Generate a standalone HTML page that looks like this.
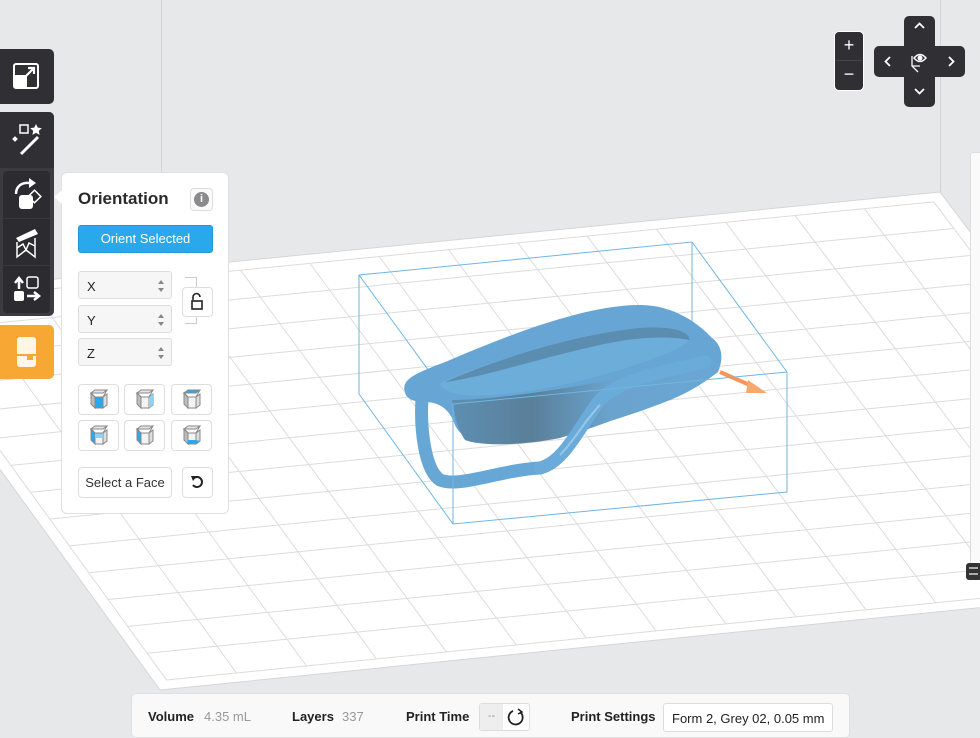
<!DOCTYPE html>
<html><head><meta charset="utf-8"><style>
*{box-sizing:border-box;margin:0;padding:0}
body{width:980px;height:734px;overflow:hidden;background:#e7e8ea;font-family:"Liberation Sans",sans-serif;position:relative}
.abs{position:absolute}
.dark{background:#2f2f34}
.btn{position:absolute;background:#fafafa;border:1px solid #ddd;border-radius:4px}
.inp{position:absolute;left:78px;width:94px;height:28px;background:#f6f6f6;border:1px solid #ddd;border-radius:3px;font-size:13px;color:#222;padding:7px 0 0 8px}
.inp:after{content:"";position:absolute;right:7px;top:8px;border:3px solid transparent;border-bottom:4px solid #888;border-top:none}
.inp:before{content:"";position:absolute;right:7px;top:16px;border:3px solid transparent;border-top:4px solid #888;border-bottom:none}
.lab{position:absolute;top:709px;font-size:13px;font-weight:bold;color:#222}
.val{position:absolute;top:709px;font-size:13px;color:#999}
</style></head><body>
<svg class="abs" style="left:0;top:0" width="980" height="734" id="scene">
<line x1="161.5" y1="0" x2="161.5" y2="690" stroke="#d2d3d6"/>
<line x1="940.5" y1="0" x2="940.5" y2="193" stroke="#d2d3d6"/>
<polygon points="-125,297 940,192 1235,582 160,690" fill="#fff" stroke="#d6d6d6"/>
<g id="grid" stroke="#dcdcdc" stroke-width="1" fill="none"></g>
<g stroke="#6fb6e3" stroke-width="1" fill="none">
<polyline points="359,394 359,275 692,242 692,362"/>
<line x1="359" y1="275" x2="453" y2="404"/>
<line x1="692" y1="242" x2="787" y2="372"/>
<line x1="359" y1="394" x2="453" y2="524"/>
</g>
<defs>
<linearGradient id="g1" x1="0" y1="0" x2="1" y2="0"><stop offset="0" stop-color="#5d8fb2"/><stop offset=".3" stop-color="#5a7f99"/><stop offset=".6" stop-color="#6aa3cd"/><stop offset="1" stop-color="#6aa7d5"/></linearGradient>
</defs>
<path d="M422,398 C420,430 425,470 440,480 C460,488 500,470 540,468" stroke="#67a7d6" stroke-width="13" fill="none" stroke-linecap="round"/>
<path d="M405,392 C400,378 420,372 450,360 C520,330 590,305 640,305 C675,305 700,325 712,338 C722,345 724,358 718,372 C705,382 690,392 670,400 C620,420 560,438 500,443 C480,445 462,440 455,425 C450,410 440,402 425,402 C412,402 406,398 405,392 Z" fill="#66a5d4"/>
<path d="M452,400 C500,400 600,385 705,360 L715,372 C690,390 620,420 560,438 C520,446 480,446 465,440 C455,425 455,412 452,400Z" fill="url(#g1)"/>
<path d="M440,383 C480,365 560,338 630,330 C665,327 690,332 690,340 C680,350 650,360 620,370 C560,388 500,398 465,395 C448,393 440,388 440,383Z" fill="#6cadda"/>
<path d="M445,382 C490,362 570,335 640,328 C670,326 688,330 690,340 C670,336 640,336 600,345 C540,358 480,378 445,382Z" fill="#5b8db0"/>
<path d="M540,468 C565,462 580,425 600,400 C620,380 660,372 705,362" stroke="#6aabd9" stroke-width="13" fill="none" stroke-linecap="round"/>
<path d="M560,455 C575,440 585,420 600,405" stroke="#a9d3ef" stroke-width="2" fill="none" opacity=".7"/>
<line x1="720" y1="372" x2="752" y2="386" stroke="#f6945a" stroke-width="4"/>
<polygon points="748,380 767,393 746,393" fill="#f6a86e"/>
<g stroke="#6fb6e3" stroke-width="1" fill="none">
<polygon points="453,404 787,372 787,492 453,524"/>
</g>
</svg>

<div class="abs dark" style="left:0;top:49px;width:54px;height:55px;border-radius:0 5px 5px 0"></div>
<svg class="abs" style="left:13px;top:63px" width="27" height="27"><rect x="1" y="1" width="24" height="24" rx="2" fill="none" stroke="#fff" stroke-width="2"/><rect x="1" y="12" width="13" height="13" rx="2" fill="#fff"/><path d="M13,13 L21,5 M15,5 H21 V11" stroke="#fff" stroke-width="2.2" fill="none"/></svg>
<div class="abs" style="left:0;top:112px;width:54px;height:204px;background:#3b3b40;border-radius:0 5px 5px 0"></div>
<div class="abs dark" style="left:0;top:112px;width:54px;height:56px;border-radius:0 5px 0 0"></div>
<svg class="abs" style="left:10px;top:122px" width="34" height="34"><rect x="10" y="3" width="8" height="8" fill="none" stroke="#fff" stroke-width="1.5"/><path d="M26,2 l1.8,3.6 4,.5 -3,2.8 .8,4 -3.6,-2 -3.6,2 .8,-4 -3,-2.8 4,-.5z" fill="#fff"/><rect x="3" y="15" width="4" height="4" transform="rotate(45 5 17)" fill="#fff"/><line x1="11" y1="32" x2="28" y2="15" stroke="#fff" stroke-width="3"/></svg>
<div class="abs" style="left:3px;top:171px;width:47px;height:142px;background:#2b2b30;border-radius:4px"></div>
<div class="abs" style="left:3px;top:218px;width:47px;height:1px;background:#38383d"></div>
<div class="abs" style="left:3px;top:265px;width:47px;height:1px;background:#38383d"></div>
<svg class="abs" style="left:10px;top:176px" width="34" height="36"><path d="M6,18 C6,10 12,6 20,7" stroke="#fff" stroke-width="2.5" fill="none"/><path d="M19,2 L26,7 L19,12z" fill="#fff"/><rect x="20" y="16" width="9" height="9" transform="rotate(45 24.5 20.5)" fill="none" stroke="#fff" stroke-width="1.5"/><rect x="9" y="19" width="14" height="14" rx="3" fill="#fff"/></svg>
<svg class="abs" style="left:13px;top:224px" width="28" height="36"><path d="M3,14 L22,5 L25,10 L6,18z" fill="#fff"/><path d="M4,18 V33 L13,26 L22,33 V14 M4,24 L10,20 L13,26 L16,19 L22,22" stroke="#fff" stroke-width="1.5" fill="none"/></svg>
<svg class="abs" style="left:12px;top:275px" width="30" height="30"><path d="M7,14 V5 M3,8 L7,3 L11,8" stroke="#fff" stroke-width="2.5" fill="none"/><rect x="15" y="2" width="11" height="11" rx="2" fill="none" stroke="#fff" stroke-width="1.5"/><rect x="2" y="16" width="10" height="10" rx="2" fill="#fff"/><path d="M15,21 H26 M22,17 L27,21 L22,25" stroke="#fff" stroke-width="2.5" fill="none"/></svg>
<div class="abs" style="left:0;top:325px;width:54px;height:54px;background:#f7a733;border-radius:0 5px 5px 0"></div>
<div class="abs" style="left:17px;top:337px;width:19px;height:30px;background:#fff6e8;border-radius:3px"></div>
<div class="abs" style="left:17px;top:354px;width:19px;height:2px;background:#f7a733"></div>
<div class="abs" style="left:27px;top:354px;width:6px;height:6px;background:#f7a733"></div>

<div class="abs" style="left:61px;top:172px;width:168px;height:342px;background:#fff;border:1px solid #e0e0e0;border-radius:6px"></div>
<div class="abs" style="left:54px;top:190px;width:0;height:0;border:7px solid transparent;border-right:8px solid #fff;border-left:none"></div>
<div class="abs" style="left:78px;top:189px;font-size:17px;font-weight:bold;color:#2a2a2a">Orientation</div>
<div class="btn" style="left:190px;top:188px;width:23px;height:23px"></div>
<div class="abs" style="left:194px;top:192px;width:15px;height:15px;border-radius:50%;background:#8a8a8e;color:#fff;font-size:11px;font-weight:bold;text-align:center;line-height:15px">i</div>
<div class="abs" style="left:78px;top:225px;width:135px;height:28px;background:#2aa8ec;border:1px solid #1f98d8;border-radius:3px;color:#fff;font-size:13px;text-align:center;line-height:26px">Orient Selected</div>
<div class="inp" style="top:271px">X</div>
<div class="inp" style="top:305px">Y</div>
<div class="inp" style="top:338px">Z</div>
<div class="abs" style="left:185px;top:277px;width:12px;height:47px;border:1px solid #ccc;border-left:none"></div>
<div class="btn" style="left:182px;top:287px;width:31px;height:30px;background:#fff"></div>
<svg class="abs" style="left:190px;top:292px" width="14" height="20"><path d="M3,8 V5 A3.5,3.5 0 0 1 10,5" stroke="#222" stroke-width="1.6" fill="none"/><rect x="2" y="9" width="10" height="8" fill="none" stroke="#222" stroke-width="1.6"/></svg>
<div id="cubes"></div>
<div class="btn" style="left:78px;top:467px;width:94px;height:31px;background:#fff;font-size:13px;color:#333;text-align:center;line-height:29px">Select a Face</div>
<div class="btn" style="left:182px;top:467px;width:31px;height:31px;background:#fff"></div>
<svg class="abs" style="left:189px;top:474px" width="16" height="16"><path d="M5,4 A5,5 0 1 1 4,11" stroke="#222" stroke-width="2" fill="none"/><path d="M2,2 L8,2 L4,7z" fill="#222"/></svg>

<div class="abs dark" style="left:834px;top:31px;width:30px;height:60px;border-radius:5px;border:1px solid #fff"></div>
<div class="abs" style="left:835px;top:60px;width:28px;height:1px;background:#444"></div>
<div class="abs" style="left:834px;top:35px;width:30px;text-align:center;color:#fff;font-size:18px">+</div>
<div class="abs" style="left:834px;top:64px;width:30px;text-align:center;color:#fff;font-size:18px">−</div>
<div class="abs dark" style="left:904px;top:16px;width:31px;height:91px;border-radius:5px"></div>
<div class="abs dark" style="left:874px;top:46px;width:91px;height:31px;border-radius:5px"></div>
<svg class="abs" style="left:874px;top:16px" width="91" height="91" stroke="#fff" stroke-width="1.8" fill="none"><path d="M41,12 L45.5,7.5 L50,12"/><path d="M41,73 L45.5,77.5 L50,73"/><path d="M16,41 L11.5,45.5 L16,50"/><path d="M75,41 L79.5,45.5 L75,50"/><path d="M40,42 Q46,35 52,42 Q46,49 40,42z" stroke-width="1.4"/><circle cx="46" cy="42" r="1.6" fill="#fff"/><path d="M38,40 V50 L44,56 M38,50 H46" stroke-width="1.3"/></svg>

<div class="abs" style="left:970px;top:152px;width:12px;height:414px;background:#fafafa;border:1px solid #ddd;border-radius:3px"></div>
<div class="abs" style="left:966px;top:563px;width:16px;height:17px;background:#333;border-radius:3px"></div>
<div class="abs" style="left:969px;top:567px;width:9px;height:8px;border-top:2px solid #aaa;border-bottom:2px solid #aaa"></div>

<div class="abs" style="left:131px;top:693px;width:719px;height:45px;background:#f9f9f9;border:1px solid #e0e0e0;border-radius:5px"></div>
<div class="lab" style="left:148px">Volume</div><div class="val" style="left:204px">4.35 mL</div>
<div class="lab" style="left:292px">Layers</div><div class="val" style="left:342px">337</div>
<div class="lab" style="left:406px">Print Time</div>
<div class="abs" style="left:479px;top:703px;width:51px;height:28px;border:1px solid #ddd;border-radius:3px;background:#fff"></div>
<div class="abs" style="left:480px;top:704px;width:23px;height:26px;background:#eee;color:#999;font-size:11px;text-align:center;line-height:24px">--</div>
<svg class="abs" style="left:507px;top:708px" width="18" height="18"><path d="M13,4 A7,7 0 1 1 6,3" stroke="#222" stroke-width="1.8" fill="none"/><path d="M11,1 L15,4 L11,6" stroke="#222" stroke-width="1.5" fill="none"/></svg>
<div class="lab" style="left:571px">Print Settings</div>
<div class="abs" style="left:663px;top:703px;width:170px;height:29px;background:#fff;border:1px solid #ddd;border-radius:3px;font-size:13px;color:#222;padding:7px 0 0 8px">Form 2, Grey 02, 0.05 mm</div>

<script>
(function(){
var BL=[-125,297],BR=[940,192],FL=[160,690],FR=[1235,582];
function P(u,v){return [(1-u)*(1-v)*BL[0]+u*(1-v)*BR[0]+(1-u)*v*FL[0]+u*v*FR[0],(1-u)*(1-v)*BL[1]+u*(1-v)*BR[1]+(1-u)*v*FL[1]+u*v*FR[1]];}
var g=document.getElementById('grid'),s='';
var a=0.012,b=0.022,n=15,m=14;
for(var k=0;k<=n;k++){var u=a+k*(1-2*a)/n,p=P(u,b),q=P(u,1-b);s+='<line x1="'+p[0]+'" y1="'+p[1]+'" x2="'+q[0]+'" y2="'+q[1]+'"/>';}
for(var k=0;k<=m;k++){var v=b+k*(1-2*b)/m,p=P(a,v),q=P(1-a,v);s+='<line x1="'+p[0]+'" y1="'+p[1]+'" x2="'+q[0]+'" y2="'+q[1]+'"/>';}
g.innerHTML=s;
var c=document.getElementById('cubes'),h='',xs=[78,124,171],ys=[384,420];
var faces=['front','rightL','top','leftL','left','bottomL'];
for(var i=0;i<6;i++){var x=xs[i%3],y=ys[Math.floor(i/3)];
var f=faces[i];
var top='#e6e6e6',fr='#f3f3f3',lf='#bdbdbd';
var extra='';
if(f=='front')fr='#2aa8ec';
if(f=='top')top='#2aa8ec';
if(f=='left')lf='#2aa8ec';
if(f=='rightL')extra='<polygon points="15,9 19,6 19,17 15,20" fill="#8fd0f5"/>';
if(f=='leftL')extra='<polygon points="7,9 15,9 15,14 7,14" fill="#8fd0f5"/>';lf=(f=='leftL')?'#2aa8ec':lf;
if(f=='bottomL')extra='<polygon points="7,16 15,16 19,17 15,20 7,20" fill="#2aa8ec"/>';
h+='<div class="btn" style="left:'+x+'px;top:'+y+'px;width:41px;height:31px;background:#fff"></div>';
h+='<svg class="abs" style="left:'+(x+10)+'px;top:'+(y+4)+'px" width="22" height="24"><polygon points="3,5 7,2 19,2 15,5" fill="'+top+'" stroke="#888"/><polygon points="3,5 7,9 7,20 3,16" fill="'+lf+'" stroke="#888"/><polygon points="7,9 15,9 15,20 7,20" fill="'+fr+'" stroke="#888"/><polygon points="15,9 19,6 19,17 15,20" fill="#ddd" stroke="#888"/>'+extra+'<polyline points="3,5 7,9 15,9 19,2" fill="none" stroke="#888"/></svg>';}
c.innerHTML=h;
})();
</script>
</body></html>
